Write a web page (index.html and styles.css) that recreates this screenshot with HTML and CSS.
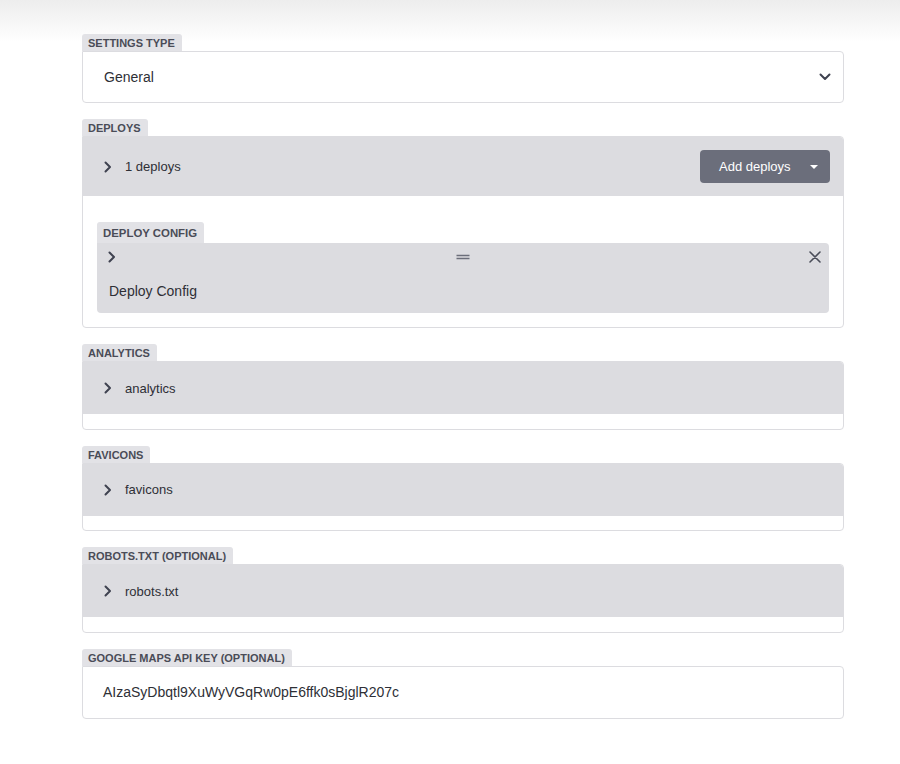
FILE: index.html
```html
<!DOCTYPE html>
<html lang="en">
<head>
    <meta charset="UTF-8">
    <meta name="viewport" content="width=device-width, initial-scale=1.0">
    <title>Settings</title>
    <link rel="stylesheet" href="styles.css">
</head>
<body>
    <div class="page">
        <!-- Settings type -->
        <div class="field">
            <span class="field-label">SETTINGS TYPE</span>
            <div class="field-box select-box">
                <span>General</span>
                <svg class="icon-down" width="12" height="8" viewBox="0 0 12 8"><path d="M1.5 1.5 L6 6 L10.5 1.5" fill="none" stroke="#3f4250" stroke-width="2" stroke-linecap="round" stroke-linejoin="round"/></svg>
            </div>
        </div>

        <!-- Deploys -->
        <div class="field">
            <span class="field-label">DEPLOYS</span>
            <div class="field-box group">
                <div class="group-head deploys-head">
                    <div class="toggle">
                        <svg class="icon-right" width="8" height="12" viewBox="0 0 8 12"><path d="M1.5 1.5 L6 6 L1.5 10.5" fill="none" stroke="#3f4250" stroke-width="2" stroke-linecap="round" stroke-linejoin="round"/></svg>
                        <span>1 deploys</span>
                    </div>
                    <button class="add-btn">Add deploys <span class="caret"></span></button>
                </div>
                <div class="group-body field">
                    <span class="field-label sub-label">DEPLOY CONFIG</span>
                    <div class="item">
                        <div class="item-head">
                            <svg class="icon-right" width="8" height="12" viewBox="0 0 8 12"><path d="M1.5 1.5 L6 6 L1.5 10.5" fill="none" stroke="#3f4250" stroke-width="2" stroke-linecap="round" stroke-linejoin="round"/></svg>
                            <svg class="icon-drag" width="14" height="6" viewBox="0 0 14 6"><path d="M0.5 1.5 H13.5 M0.5 4.5 H13.5" stroke="#6b6e7a" stroke-width="1.4"/></svg>
                            <svg class="icon-close" width="12" height="12" viewBox="0 0 12 12"><path d="M1 1 L11 11 M11 1 L1 11" stroke="#4a4d59" stroke-width="1.6" stroke-linecap="round"/></svg>
                        </div>
                        <div class="item-body">Deploy Config</div>
                    </div>
                </div>
            </div>
        </div>

        <!-- Analytics -->
        <div class="field">
            <span class="field-label">ANALYTICS</span>
            <div class="field-box group">
                <div class="group-head">
                    <div class="toggle">
                        <svg class="icon-right" width="8" height="12" viewBox="0 0 8 12"><path d="M1.5 1.5 L6 6 L1.5 10.5" fill="none" stroke="#3f4250" stroke-width="2" stroke-linecap="round" stroke-linejoin="round"/></svg>
                        <span>analytics</span>
                    </div>
                </div>
                <div class="group-foot"></div>
            </div>
        </div>

        <!-- Favicons -->
        <div class="field">
            <span class="field-label">FAVICONS</span>
            <div class="field-box group">
                <div class="group-head">
                    <div class="toggle">
                        <svg class="icon-right" width="8" height="12" viewBox="0 0 8 12"><path d="M1.5 1.5 L6 6 L1.5 10.5" fill="none" stroke="#3f4250" stroke-width="2" stroke-linecap="round" stroke-linejoin="round"/></svg>
                        <span>favicons</span>
                    </div>
                </div>
                <div class="group-foot"></div>
            </div>
        </div>

        <!-- Robots -->
        <div class="field">
            <span class="field-label">ROBOTS.TXT (OPTIONAL)</span>
            <div class="field-box group">
                <div class="group-head">
                    <div class="toggle">
                        <svg class="icon-right" width="8" height="12" viewBox="0 0 8 12"><path d="M1.5 1.5 L6 6 L1.5 10.5" fill="none" stroke="#3f4250" stroke-width="2" stroke-linecap="round" stroke-linejoin="round"/></svg>
                        <span>robots.txt</span>
                    </div>
                </div>
                <div class="group-foot"></div>
            </div>
        </div>

        <!-- Google maps key -->
        <div class="field">
            <span class="field-label">GOOGLE MAPS API KEY (OPTIONAL)</span>
            <div class="field-box input-box">AIzaSyDbqtl9XuWyVGqRw0pE6ffk0sBjglR207c</div>
        </div>
    </div>
</body>
</html>
```

FILE: styles.css
```css
/* General Styles */
body {
    margin: 0;
    font-family: "Liberation Sans", Arial, sans-serif;
    color: #2e2f36;
    background: linear-gradient(#ededed, #ffffff 42px) no-repeat, #ffffff;
    min-height: 764px;
}

.page {
    width: 762px;
    padding: 34px 0 0 82px;
}

.field {
    display: flex;
    flex-direction: column;
    align-items: flex-start;
    margin-bottom: 16px;
}

.field-label {
    height: 17px;
    line-height: 18px;
    padding: 0 7px 0 6px;
    font-size: 11px;
    font-weight: 700;
    color: #4a4c57;
    background-color: #e2e2e6;
    border-radius: 3px 3px 0 0;
}

.field-box {
    align-self: stretch;
    border: 1px solid #dcdce0;
    border-radius: 0 4px 4px 4px;
    background-color: #ffffff;
    box-sizing: border-box;
}

/* Select / input */
.select-box, .input-box {
    height: 52px;
    display: flex;
    align-items: center;
    font-size: 14px;
}

.select-box {
    justify-content: space-between;
    padding: 0 12px 0 21px;
}

.input-box {
    height: 53px;
    padding: 0 20px;
}

/* Collapsible groups */
.group {
    overflow: hidden;
}

.group-head {
    display: flex;
    align-items: center;
    justify-content: space-between;
    height: 52px;
    padding: 0 13px 0 21px;
    background-color: #dcdce0;
    font-size: 13px;
}

.deploys-head {
    height: 59px;
}

.toggle {
    display: flex;
    align-items: center;
    gap: 13px;
}

.group-foot {
    height: 14.5px;
}

.add-btn {
    width: 130px;
    height: 33px;
    border: none;
    border-radius: 4px;
    background-color: #6b6e7b;
    color: #ffffff;
    font-family: inherit;
    font-size: 13px;
    display: flex;
    align-items: center;
    padding: 0 0 0 19px;
}

.caret {
    margin-left: 19px;
    width: 0;
    height: 0;
    border-left: 4px solid transparent;
    border-right: 4px solid transparent;
    border-top: 4px solid #ffffff;
}

.group-body {
    margin: 0;
    padding: 26px 14px 14px 14px;
}

.sub-label {
    height: 21px;
    line-height: 22px;
    font-size: 11.4px;
}

.item {
    align-self: stretch;
    background-color: #dcdce0;
    border-radius: 0 4px 4px 4px;
    height: 70px;
}

.item-head {
    display: flex;
    align-items: center;
    justify-content: space-between;
    padding: 7px 8px 0 11px;
    height: 13px;
}

.item-body {
    padding: 20px 12px 0 12px;
    font-size: 14px;
}
```
